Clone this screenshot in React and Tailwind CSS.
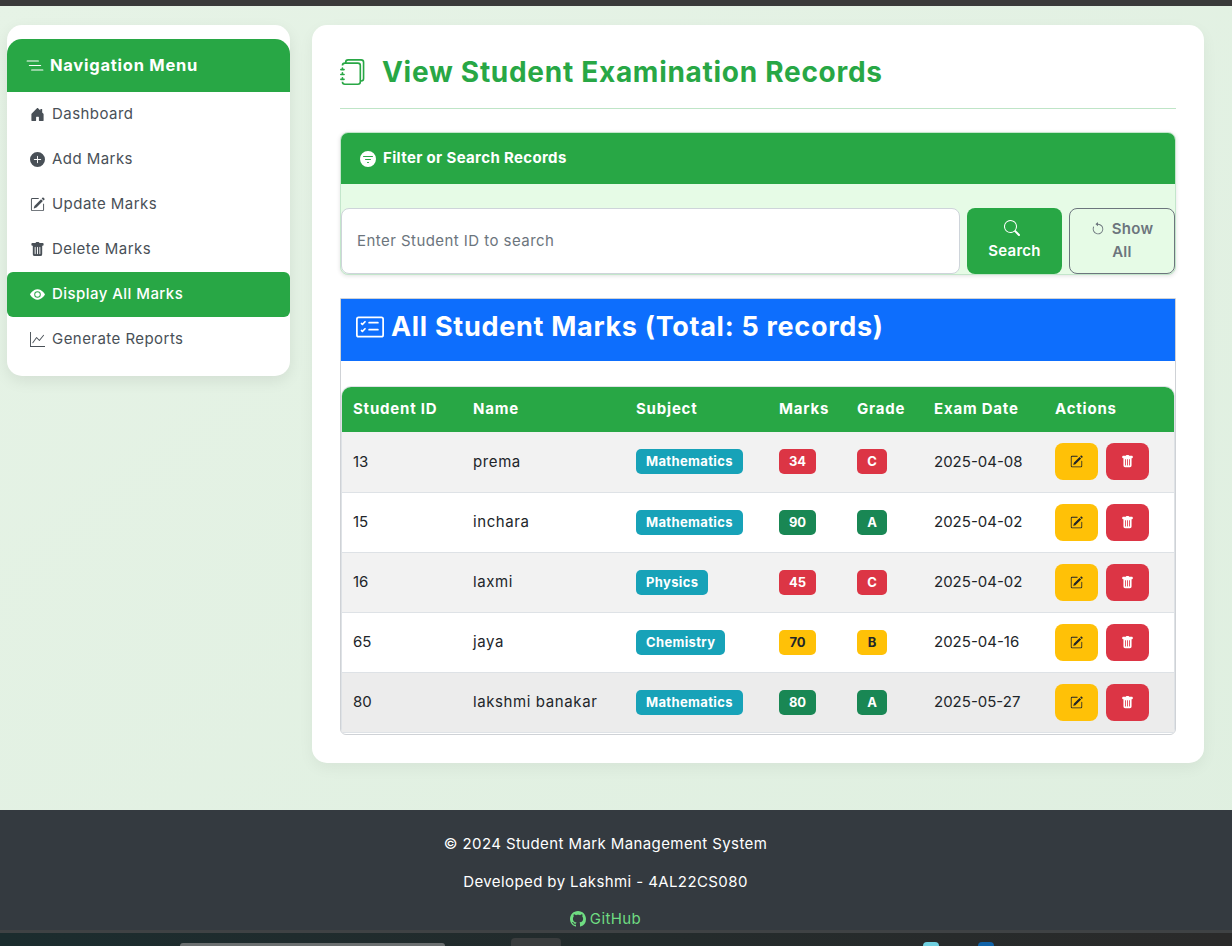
import {
  BsArrowCounterclockwise,
  BsCardChecklist,
  BsEyeFill,
  BsFilterCircleFill,
  BsGithub,
  BsGraphUp,
  BsHouseDoorFill,
  BsJournals,
  BsListNested,
  BsPencilSquare,
  BsPlusCircleFill,
  BsSearch,
  BsTrashFill,
} from "react-icons/bs";

const navItems = [
  { label: "Dashboard", icon: BsHouseDoorFill },
  { label: "Add Marks", icon: BsPlusCircleFill },
  { label: "Update Marks", icon: BsPencilSquare },
  { label: "Delete Marks", icon: BsTrashFill },
  { label: "Display All Marks", icon: BsEyeFill, active: true },
  { label: "Generate Reports", icon: BsGraphUp },
];

const red = "bg-[#dc3545] text-white";
const green = "bg-[#198754] text-white";
const yellow = "bg-[#ffc107] text-[#212529]";

const rows = [
  { id: 13, name: "prema", subject: "Mathematics", marks: 34, grade: "C", date: "2025-04-08", tone: red, bg: "bg-[#f2f2f2]" },
  { id: 15, name: "inchara", subject: "Mathematics", marks: 90, grade: "A", date: "2025-04-02", tone: green, bg: "bg-white" },
  { id: 16, name: "laxmi", subject: "Physics", marks: 45, grade: "C", date: "2025-04-02", tone: red, bg: "bg-[#f2f2f2]" },
  { id: 65, name: "jaya", subject: "Chemistry", marks: 70, grade: "B", date: "2025-04-16", tone: yellow, bg: "bg-white" },
  { id: 80, name: "lakshmi banakar", subject: "Mathematics", marks: 80, grade: "A", date: "2025-05-27", tone: green, bg: "bg-[#ececec]" },
];

const columns = [
  { label: "Student ID", width: "w-[119px]" },
  { label: "Name", width: "w-[163px]" },
  { label: "Subject", width: "w-[143px]" },
  { label: "Marks", width: "w-[78px]" },
  { label: "Grade", width: "w-[77px]" },
  { label: "Exam Date", width: "w-[121px]" },
  { label: "Actions", width: "w-[131px]" },
];

function Sidebar() {
  return (
    <aside className="w-[283px] shrink-0 rounded-[15px] bg-white pt-[14px] pb-[14px] shadow-[0_5px_15px_rgba(0,0,0,0.08)]">
      <div className="flex h-[53px] items-center gap-[6px] rounded-t-[15px] bg-[#28a745] pl-[19px] text-[16.5px] font-bold tracking-[0.75px] text-white">
        <BsListNested className="text-[18px]" />
        Navigation Menu
      </div>
      <nav>
        {navItems.map(({ label, icon: Icon, active }) => (
          <div
            key={label}
            className={`flex h-[45px] items-center gap-[7px] pl-[22px] text-[15px] tracking-[0.45px] ${
              active ? "rounded-[6px] bg-[#28a745] font-medium text-white" : "text-[#495057]"
            }`}
          >
            <span className="flex w-[16px] justify-center">
              <Icon className="text-[15px]" />
            </span>
            {label}
          </div>
        ))}
      </nav>
    </aside>
  );
}

function FilterCard() {
  return (
    <section className="mt-[23px] rounded-[8px] border border-[#c3e6cb] bg-[#e6fbe6] shadow-[0_1px_4px_rgba(0,0,0,0.12)]">
      <div className="flex h-[51px] items-center gap-[7px] rounded-t-[7px] bg-[#28a745] pl-[19px] text-[15px] font-bold tracking-[0.35px] text-white">
        <BsFilterCircleFill className="text-[16px]" />
        Filter or Search Records
      </div>
      <div className="flex items-stretch pt-[24px]">
        <div className="flex h-[66px] w-[619px] items-center rounded-[8px] border border-[#ced4da] bg-white pl-[15px] text-[15px] tracking-[0.45px] text-[#6c757d]">
          Enter Student ID to search
        </div>
        <div className="ml-[7px] flex w-[95px] flex-col items-center justify-center gap-[4px] rounded-[8px] bg-[#28a745] text-[15px] font-semibold tracking-[0.3px] text-white">
          <BsSearch className="mr-[6px] text-[16px]" />
          Search
        </div>
        <div className="ml-[7px] flex w-[106px] flex-col items-center justify-center rounded-[8px] border border-[#6c757d] pb-[2px] text-center text-[15px] leading-[23px] font-semibold tracking-[0.3px] text-[#6c757d]">
          <span className="flex items-center gap-[7px]">
            <BsArrowCounterclockwise className="text-[14px]" />
            Show
          </span>
          All
        </div>
      </div>
    </section>
  );
}

function MarksTable() {
  return (
    <section className="mt-[23px] overflow-hidden rounded-b-[6px] border border-[#cfd2d6] bg-white">
      <div className="flex h-[62px] items-center gap-[7px] bg-[#0d6efd] pb-[6px] pl-[15px] text-[27px] font-bold tracking-[0.7px] text-white">
        <BsCardChecklist className="text-[28px]" />
        All Student Marks (Total: 5 records)
      </div>
      <div className="pt-[25px]">
        <div className="overflow-hidden rounded-t-[10px] border-x border-t border-[#dee2e6] pb-[1px]">
          <table className="w-full table-fixed border-collapse text-[15px] text-[#212529]">
            <colgroup>
              {columns.map((c) => (
                <col key={c.label} className={c.width} />
              ))}
            </colgroup>
            <thead>
              <tr className="h-[45px] bg-[#28a745] text-left text-white">
                {columns.map((c, i) => (
                  <th key={c.label} className={`font-bold tracking-[0.8px] ${i === 0 ? "pl-[11px]" : "pl-[12px]"}`}>
                    {c.label}
                  </th>
                ))}
              </tr>
            </thead>
            <tbody>
              {rows.map((r) => (
                <tr key={r.id} className={`h-[60px] border-b border-[#dee2e6] ${r.bg}`}>
                  <td className="pl-[11px]">{r.id}</td>
                  <td className="pl-[12px] tracking-[0.6px]">{r.name}</td>
                  <td className="pl-[12px]">
                    <span className="inline-block rounded-[5px] bg-[#17a2b8] px-[10px] py-[4px] text-[13px] leading-[17px] font-bold tracking-[0.35px] text-white">
                      {r.subject}
                    </span>
                  </td>
                  <td className="pl-[12px]">
                    <span className={`inline-block w-[37px] rounded-[5px] py-[4px] text-center text-[13px] leading-[17px] font-bold ${r.tone}`}>
                      {r.marks}
                    </span>
                  </td>
                  <td className="pl-[12px]">
                    <span className={`inline-block w-[30px] rounded-[5px] py-[4px] text-center text-[13px] leading-[17px] font-bold ${r.tone}`}>
                      {r.grade}
                    </span>
                  </td>
                  <td className="pl-[12px]">{r.date}</td>
                  <td className="pl-[12px]">
                    <div className="flex gap-[8px]">
                      <span className="flex h-[37px] w-[43px] items-center justify-center rounded-[8px] bg-[#ffc107] text-[#212529]">
                        <BsPencilSquare className="text-[13px]" />
                      </span>
                      <span className="flex h-[37px] w-[43px] items-center justify-center rounded-[8px] bg-[#dc3545] text-white">
                        <BsTrashFill className="text-[13px]" />
                      </span>
                    </div>
                  </td>
                </tr>
              ))}
            </tbody>
          </table>
        </div>
      </div>
    </section>
  );
}

export default function App() {
  return (
    <div className="flex h-[946px] flex-col overflow-hidden bg-gradient-to-br from-[#e6f3e6] to-[#dfefe0] font-['Inter',sans-serif]">
      <div className="h-[6px] shrink-0 bg-[#3a3a3a]" />
      <div className="flex h-[804px] shrink-0 items-start gap-[22px] pt-[19px] pl-[7px]">
        <Sidebar />
        <main className="w-[892px] rounded-[15px] bg-white px-[28px] pt-[28px] pb-[28px] shadow-[0_5px_15px_rgba(0,0,0,0.05)]">
          <div className="flex items-center gap-[16px] border-b border-[#bfe5c7] pb-[17px] text-[28px] leading-[38px] font-bold tracking-[0.72px] text-[#28a745]">
            <BsJournals className="text-[26px]" />
            <h1>View Student Examination Records</h1>
          </div>
          <FilterCard />
          <MarksTable />
        </main>
      </div>
      <footer className="flex h-[123px] shrink-0 flex-col items-center border-b-[3px] border-[#3f4244] bg-[#343a40] pt-[24px] pr-[21px] text-[15px] tracking-[0.4px] text-white">
        <p className="leading-[20px]">© 2024 Student Mark Management System</p>
        <p className="mt-[18px] leading-[20px]">Developed by Lakshmi - 4AL22CS080</p>
        <p className="mt-[17px] flex items-center gap-[4px] leading-[20px] text-[#6fdc82]">
          <BsGithub className="text-[16px]" />
          GitHub
        </p>
      </footer>
      <div className="flex h-[13px] shrink-0 items-end bg-gradient-to-r from-[#1b2c2e] to-[#2a2a2a]">
        <div className="ml-[180px] h-[3px] w-[265px] rounded-t-[8px] bg-[#6b6f70]" />
        <div className="ml-[66px] h-[8px] w-[50px] rounded-t-[4px] bg-[#3a3d3e]" />
        <div className="ml-[362px] h-[4px] w-[16px] rounded-t-full bg-[#6fd0e0]" />
        <div className="ml-[39px] h-[4px] w-[16px] rounded-t-full bg-[#0f62a8]" />
      </div>
    </div>
  );
}
